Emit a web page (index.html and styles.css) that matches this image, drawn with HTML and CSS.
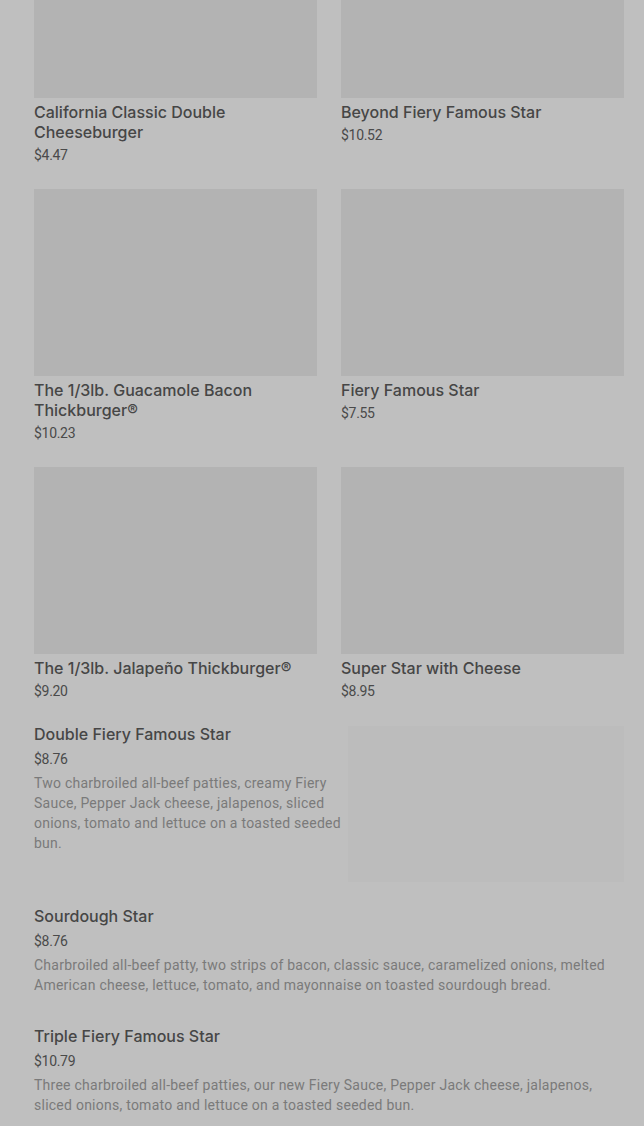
FILE: index.html
```html
<!DOCTYPE html>
<html lang="en">
<head>
    <meta charset="UTF-8">
    <meta name="viewport" content="width=device-width, initial-scale=1.0">
    <title>Menu</title>
    <link rel="stylesheet" href="styles.css">
</head>
<body>
    <!-- Featured grid -->
    <div class="menu">
        <div class="grid">
            <div class="card">
                <div class="thumb"></div>
                <div class="name">California Classic Double Cheeseburger</div>
                <div class="price">$4.47</div>
            </div>
            <div class="card">
                <div class="thumb"></div>
                <div class="name">Beyond Fiery Famous Star</div>
                <div class="price">$10.52</div>
            </div>
            <div class="card">
                <div class="thumb"></div>
                <div class="name">The 1/3lb. Guacamole Bacon Thickburger®</div>
                <div class="price">$10.23</div>
            </div>
            <div class="card">
                <div class="thumb"></div>
                <div class="name">Fiery Famous Star</div>
                <div class="price">$7.55</div>
            </div>
            <div class="card">
                <div class="thumb"></div>
                <div class="name">The 1/3lb. Jalapeño Thickburger®</div>
                <div class="price">$9.20</div>
            </div>
            <div class="card">
                <div class="thumb"></div>
                <div class="name">Super Star with Cheese</div>
                <div class="price">$8.95</div>
            </div>
        </div>

        <!-- List -->
        <div class="list">
            <div class="item">
                <div class="info">
                    <div class="name">Double Fiery Famous Star</div>
                    <div class="price">$8.76</div>
                    <div class="desc">Two charbroiled all-beef patties, creamy Fiery Sauce, Pepper Jack cheese, jalapenos, sliced onions, tomato and lettuce on a toasted seeded bun.</div>
                </div>
                <div class="item-thumb"></div>
            </div>
            <div class="item">
                <div class="info">
                    <div class="name">Sourdough Star</div>
                    <div class="price">$8.76</div>
                    <div class="desc">Charbroiled all-beef patty, two strips of bacon, classic sauce, caramelized onions, melted American cheese, lettuce, tomato, and mayonnaise on toasted sourdough bread.</div>
                </div>
            </div>
            <div class="item">
                <div class="info">
                    <div class="name">Triple Fiery Famous Star</div>
                    <div class="price">$10.79</div>
                    <div class="desc">Three charbroiled all-beef patties, our new Fiery Sauce, Pepper Jack cheese, jalapenos, sliced onions, tomato and lettuce on a toasted seeded bun.</div>
                </div>
            </div>
        </div>
    </div>
</body>
</html>
```

FILE: styles.css
```css
/* General */
body, html {
    margin: 0;
    padding: 0;
    font-family: Roboto, "Liberation Sans", sans-serif;
    background-color: #bfbfbf;
    overflow: hidden;
}
.menu {
    padding: 0 20px 0 34px;
    margin-top: -89px;
}

/* Grid of cards */
.grid {
    display: grid;
    grid-template-columns: 1fr 1fr;
    column-gap: 24px;
    row-gap: 25px;
}
.thumb {
    height: 187px;
    background: #b3b3b3;
    margin-bottom: 4px;
}
.name {
    font-family: Inter, Roboto, sans-serif;
    font-size: 16px;
    line-height: 20px;
    font-weight: 500;
    color: #464646;
}
.price {
    font-size: 14px;
    line-height: 18px;
    color: #4a4a4a;
    margin-top: 4px;
    letter-spacing: -0.3px;
}

/* List */
.list {
    margin-top: 24px;
}
.item {
    display: flex;
    gap: 4px;
    margin-bottom: 24px;
}
.info {
    flex: 1;
    padding-bottom: 7px;
}
.item .price {
    margin-top: 6px;
}
.desc {
    font-size: 14px;
    line-height: 20px;
    color: #7a7a7a;
    margin-top: 5px;
    letter-spacing: 0.25px;
}
.item-thumb {
    width: 276px;
    height: 156px;
    margin-top: 2px;
    flex-shrink: 0;
    background: #bcbcbc;
}
```
